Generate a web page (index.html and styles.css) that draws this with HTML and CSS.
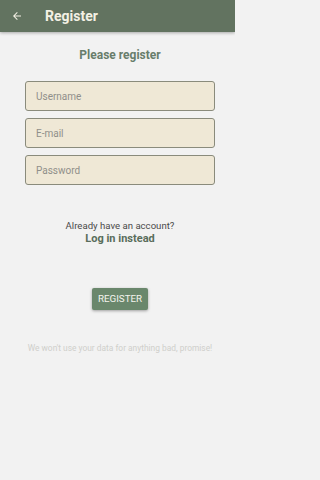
FILE: index.html
```html
<!DOCTYPE html>
<html>
<head>
<meta charset="utf-8">
<link rel="stylesheet" href="styles.css">
</head>
<body>
<header class="appbar">
  <svg class="back" width="12" height="12" viewBox="0 0 24 24"><path d="M20 11H7.83l5.59-5.59L12 4l-8 8 8 8 1.41-1.41L7.83 13H20v-2z" fill="#f3f0e4"/></svg>
  <span class="title">Register</span>
</header>
<main class="content">
  <h1 class="heading">Please register</h1>
  <div class="fields">
    <div class="field">Username</div>
    <div class="field">E-mail</div>
    <div class="field">Password</div>
  </div>
  <p class="already">Already have an account?</p>
  <p class="login">Log in instead</p>
  <div class="btnrow"><span class="btn">REGISTER</span></div>
  <p class="note">We won't use your data for anything bad, promise!</p>
</main>
</body>
</html>
```
FILE: styles.css
```css
html, body { margin: 0; padding: 0; }
body { background: #f2f2f2; font-family: Roboto, "Liberation Sans", sans-serif; width: 235px; height: 480px; overflow: hidden; }
.appbar { height: 32px; background: #627360; display: flex; align-items: center; box-shadow: 0 1px 3px rgba(0,0,0,0.3); position: relative; }
.back { margin-left: 11px; }
.title { margin-left: 22px; color: #f3f0e4; font-weight: 700; font-size: 14px; }
.content { display: flex; flex-direction: column; align-items: center; padding-left: 5px; }
.heading { margin: 15px 0 0; font-size: 12px; font-weight: 700; color: #687d6b; line-height: 16px; }
.fields { margin-top: 18px; display: flex; flex-direction: column; gap: 7px; }
.field { width: 188px; height: 28px; border: 1px solid #8a8b7c; border-radius: 3px; background: #efe8d6; display: flex; align-items: center; font-size: 10px; color: #8f8f8a; text-indent: 10px; }
.already { margin: 35px 0 0; font-size: 9.6px; color: #4a4a4a; line-height: 12px; }
.login { margin: 0; font-size: 11px; font-weight: 700; color: #596d5b; line-height: 14px; }
.btnrow { margin-top: 41px; }
.btn { display: inline-block; background: #6a876c; color: #f4f4ee; font-size: 9.8px; padding: 6px 6px; line-height: 10px; border-radius: 2px; box-shadow: 0 1px 3px rgba(0,0,0,0.35); }
.note { margin: 33px 0 0; font-size: 8.4px; color: #cfcfcb; line-height: 10px; }
```
